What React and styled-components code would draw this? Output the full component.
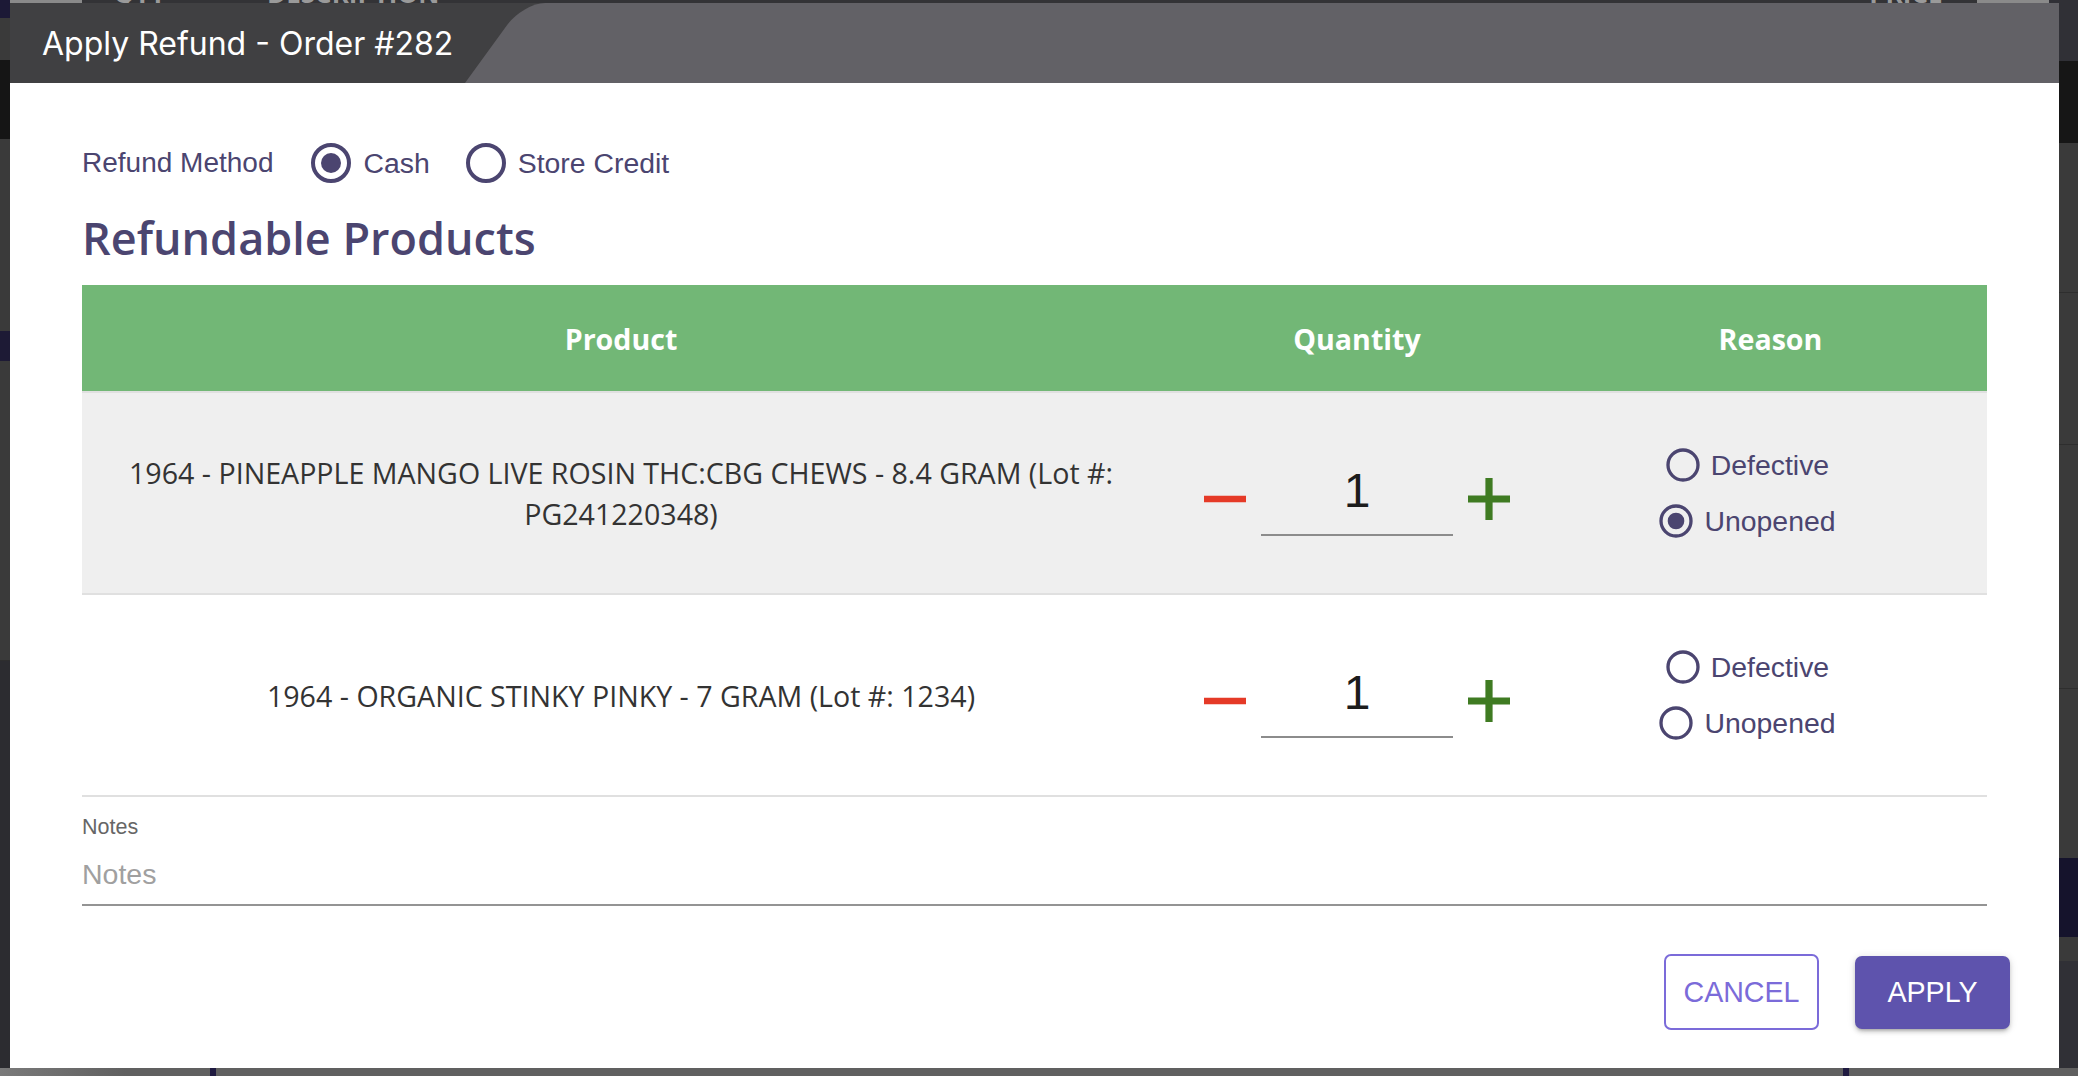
import React from "react";
import styled, { createGlobalStyle } from "styled-components";

const GlobalStyle = createGlobalStyle`
  html, body { margin: 0; padding: 0; width: 100%; height: 100%; overflow: hidden; background: #2c2c30; }
  #root { width: 100%; height: 100%; }
  * { box-sizing: border-box; }
`;

/* ---------- page behind the modal ---------- */
const Page = styled.div`
  width: 100%;
  height: 100%;
  display: grid;
  grid-template-columns: 10px 1fr 19px;
  grid-template-rows: 3px 1fr 8px;
  grid-template-areas:
    "top top top"
    "left main right"
    "bottom bottom bottom";
`;

const TopStrip = styled.div`
  grid-area: top;
  display: flex;
  overflow: hidden;
  background: #333336;
`;

const Seg = styled.div`
  flex: ${(p) => (p.$grow ? "1" : "none")};
  width: ${(p) => (p.$w ? `${p.$w}px` : "auto")};
  height: ${(p) => (p.$h ? `${p.$h}px` : "auto")};
  background: ${(p) => p.$bg};
  border-bottom: ${(p) => (p.$line ? "1px solid #2e2e2e" : "none")};
`;

const BackLabels = styled.div`
  flex: 1;
  display: flex;
  align-items: flex-end;
  height: 3px;
  overflow: hidden;
  padding-left: 32px;
`;

const BackLabel = styled.span`
  font-family: "Open Sans", sans-serif;
  font-weight: 700;
  font-size: 26px;
  line-height: 20px;
  color: #9a9a9a;
  margin-left: ${(p) => p.$ml || 0}px;
  white-space: nowrap;
`;

const SideStrip = styled.div`
  grid-area: ${(p) => p.$area};
  display: flex;
  flex-direction: column;
  overflow: hidden;
`;

const BottomStrip = styled.div`
  grid-area: bottom;
  display: flex;
  background: #606060;
`;

/* ---------- dialog ---------- */
const Dialog = styled.section`
  grid-area: main;
  background: #ffffff;
  display: flex;
  flex-direction: column;
  overflow: hidden;
  min-height: 0;
`;

const Header = styled.header`
  flex: none;
  height: 80px;
  display: flex;
  background: #404042;
  overflow: hidden;
`;

const Title = styled.h1`
  flex: none;
  width: 455px;
  margin: 0;
  padding-left: 32px;
  display: flex;
  align-items: center;
  font-family: Inter, "Liberation Sans", sans-serif;
  font-weight: 400;
  font-size: 32px;
  letter-spacing: 0;
  color: #ffffff;
`;

const HeaderFill = styled.div`
  flex: 1;
  margin-right: -80px;
  background: #626166;
  border-top-left-radius: 22px;
  transform: skewX(-36deg);
  transform-origin: bottom left;
`;

const Content = styled.div`
  padding: 0 72px;
  display: flex;
  flex-direction: column;
`;

const MethodRow = styled.div`
  margin-top: 56px;
  height: 48px;
  display: flex;
  align-items: center;
`;

const MethodLabel = styled.span`
  font-family: "Liberation Sans", Arial, sans-serif;
  font-size: 28px;
  color: #4b4570;
  margin-right: 34px;
`;

const Option = styled.label`
  display: inline-flex;
  align-items: center;
  gap: 8px;
  margin-right: ${(p) => p.$mr || 0}px;
  font-family: "Liberation Sans", Arial, sans-serif;
  font-size: 28.4px;
  color: #4b4570;
  cursor: pointer;
`;

const Heading = styled.h2`
  margin: 24px 0 0;
  font-family: "Open Sans", sans-serif;
  font-weight: 600;
  font-size: 45px;
  line-height: 54px;
  color: #4b4570;
`;

const Table = styled.div`
  margin-top: 20px;
  display: grid;
  grid-template-columns: 1078px 394px 1fr;
`;

const HeadRow = styled.div`
  display: contents;
`;

const HeadCell = styled.div`
  height: 108px;
  background: #72b776;
  border-bottom: 2px solid #e0e0e0;
  display: flex;
  align-items: center;
  justify-content: center;
  font-family: "Open Sans", sans-serif;
  font-weight: 700;
  font-size: 28.6px;
  color: #ffffff;
`;

const Cell = styled.div`
  height: 202px;
  background: ${(p) => (p.$shaded ? "#efefef" : "#ffffff")};
  border-bottom: 2px solid #e0e0e0;
  display: flex;
  align-items: center;
  justify-content: center;
`;

const ProductText = styled.div`
  padding: 0 38px;
  text-align: center;
  font-family: "Open Sans", sans-serif;
  font-size: 28.6px;
  line-height: 41px;
  color: #333333;
`;

const QtyGroup = styled.div`
  display: flex;
  align-items: center;
  margin-top: 11px;
`;

const IconButton = styled.button`
  width: 72px;
  height: 72px;
  padding: 0;
  border: none;
  background: transparent;
  display: flex;
  align-items: center;
  justify-content: center;
  cursor: pointer;
  svg { display: block; }
`;

const QtyInput = styled.input`
  width: 192px;
  height: 74px;
  padding: 0 0 14px;
  border: none;
  border-bottom: 2px solid #8c8c8c;
  background: transparent;
  outline: none;
  text-align: center;
  font-family: "Liberation Sans", Arial, sans-serif;
  font-size: 48px;
  color: #1c1c1c;
`;

const ReasonCell = styled(Cell)`
  flex-direction: column;
  gap: 16px;
  padding-right: 49px;
`;

const NotesField = styled.div`
  margin-top: 20px;
  display: flex;
  flex-direction: column;
`;

const NotesLabel = styled.label`
  font-family: "Liberation Sans", Arial, sans-serif;
  font-size: 21.5px;
  line-height: 20px;
  color: #666666;
`;

const NotesInput = styled.input`
  height: 69px;
  padding: 20px 0 13px;
  border: none;
  border-bottom: 2px solid #949494;
  outline: none;
  background: transparent;
  font-family: "Liberation Sans", Arial, sans-serif;
  font-size: 28.5px;
  color: #333;
  &::placeholder { color: #a0a0a0; opacity: 1; }
`;

const Actions = styled.div`
  margin-top: 48px;
  padding-right: 49px;
  display: flex;
  justify-content: flex-end;
  align-items: center;
  gap: 36px;
`;

const Button = styled.button`
  width: 155px;
  height: ${(p) => (p.$primary ? 73 : 76)}px;
  border-radius: 7px;
  font-family: "Liberation Sans", Arial, sans-serif;
  font-size: 28.6px;
  text-transform: uppercase;
  cursor: pointer;
  border: ${(p) => (p.$primary ? "none" : "2px solid #7b6bd9")};
  background: ${(p) => (p.$primary ? "#5e53ad" : "#ffffff")};
  color: ${(p) => (p.$primary ? "#ffffff" : "#7b6bd9")};
  box-shadow: ${(p) =>
    p.$primary
      ? "0 3px 3px -2px rgba(0,0,0,0.2), 0 3px 4px 0 rgba(0,0,0,0.14), 0 1px 8px 0 rgba(0,0,0,0.12)"
      : "none"};
`;

/* ---------- icons ---------- */
const RadioIcon = ({ checked, size }) => (
  <svg width={size} height={size} viewBox="0 0 24 24" aria-hidden="true">
    <circle cx="12" cy="12" r="9" fill="none" stroke="#4b4570" strokeWidth="2" />
    {checked && <circle cx="12" cy="12" r="5" fill="#4b4570" />}
  </svg>
);

const MinusIcon = () => (
  <svg width="72" height="72" viewBox="0 0 24 24" aria-hidden="true">
    <path d="M19 13.1H5v-2.2h14z" fill="#e53a27" />
  </svg>
);

const PlusIcon = () => (
  <svg width="72" height="72" viewBox="0 0 24 24" aria-hidden="true">
    <path d="M19 13.2h-5.8V19h-2.4v-5.8H5v-2.4h5.8V5h2.4v5.8H19z" fill="#3f7b22" />
  </svg>
);

const Radio = ({ checked, size, label, mr }) => (
  <Option $mr={mr}>
    <RadioIcon checked={checked} size={size} />
    {label}
  </Option>
);

const products = [
  {
    name: "1964 - PINEAPPLE MANGO LIVE ROSIN THC:CBG CHEWS - 8.4 GRAM (Lot #: PG241220348)",
    qty: 1,
    reason: "Unopened",
  },
  { name: "1964 - ORGANIC STINKY PINKY - 7 GRAM (Lot #: 1234)", qty: 1, reason: null },
];

export default function App() {
  return (
    <>
      <GlobalStyle />
      <Page>
        <TopStrip>
          <Seg $w={10} $bg="#1c1936" />
          <Seg $w={72} $bg="#8a8a8a" />
          <BackLabels>
            <BackLabel>QTY</BackLabel>
            <BackLabel $ml={101}>DESCRIPTION</BackLabel>
            <BackLabel $ml={1430}>PRICE</BackLabel>
          </BackLabels>
          <Seg $w={72} $bg="#8a8a8a" />
          <Seg $w={29} $bg="#303036" />
        </TopStrip>

        <SideStrip $area="left">
          <Seg $h={15} $bg="#1c1936" />
          <Seg $h={42} $bg="#3a3a3a" />
          <Seg $h={79} $bg="#151515" />
          <Seg $h={192} $bg="#3a3a3a" />
          <Seg $h={30} $bg="#1d1a35" />
          <Seg $h={300} $bg="#3a3a3a" $line />
          <Seg $grow $bg="#2c2c30" />
        </SideStrip>

        <Dialog>
          <Header>
            <Title>Apply Refund - Order #282</Title>
            <HeaderFill />
          </Header>
          <Content>
            <MethodRow>
              <MethodLabel>Refund Method</MethodLabel>
              <Radio checked size={48} label="Cash" mr={32} />
              <Radio size={48} label="Store Credit" />
            </MethodRow>
            <Heading>Refundable Products</Heading>
            <Table>
              <HeadRow>
                <HeadCell>Product</HeadCell>
                <HeadCell>Quantity</HeadCell>
                <HeadCell>Reason</HeadCell>
              </HeadRow>
              {products.map((p, i) => (
                <React.Fragment key={i}>
                  <Cell $shaded={i === 0}>
                    <ProductText>{p.name}</ProductText>
                  </Cell>
                  <Cell $shaded={i === 0}>
                    <QtyGroup>
                      <IconButton aria-label="decrease">
                        <MinusIcon />
                      </IconButton>
                      <QtyInput readOnly value={p.qty} />
                      <IconButton aria-label="increase">
                        <PlusIcon />
                      </IconButton>
                    </QtyGroup>
                  </Cell>
                  <ReasonCell $shaded={i === 0}>
                    <Radio size={40} label="Defective" checked={p.reason === "Defective"} />
                    <Radio size={40} label="Unopened" checked={p.reason === "Unopened"} />
                  </ReasonCell>
                </React.Fragment>
              ))}
            </Table>
            <NotesField>
              <NotesLabel>Notes</NotesLabel>
              <NotesInput placeholder="Notes" />
            </NotesField>
          </Content>
          <Actions>
            <Button>Cancel</Button>
            <Button $primary>Apply</Button>
          </Actions>
        </Dialog>

        <SideStrip $area="right">
          <Seg $h={58} $bg="#303036" />
          <Seg $h={82} $bg="#161616" />
          <Seg $h={150} $bg="#3a3a3a" $line />
          <Seg $h={152} $bg="#3a3a3a" $line />
          <Seg $h={244} $bg="#3a3a3a" $line />
          <Seg $h={169} $bg="#3a3a3a" />
          <Seg $h={79} $bg="#15132c" />
          <Seg $h={24} $bg="#3a3a3a" />
          <Seg $grow $bg="#303036" />
        </SideStrip>

        <BottomStrip>
          <Seg $w={210} $bg="linear-gradient(90deg, #7a7a7a, #606060 60%)" />
          <Seg $w={6} $bg="#1f1a40" />
          <Seg $w={1627} $bg="#606060" />
          <Seg $w={6} $bg="#1f1a40" />
          <Seg $grow $bg="#606060" />
        </BottomStrip>
      </Page>
    </>
  );
}
